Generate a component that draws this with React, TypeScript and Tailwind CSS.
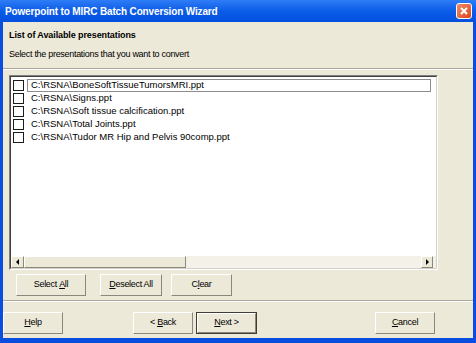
import React from "react";

const FONT = { fontFamily: '"Liberation Sans", Arial, sans-serif' };

const FILES = [
  "C:\\RSNA\\BoneSoftTissueTumorsMRI.ppt",
  "C:\\RSNA\\Signs.ppt",
  "C:\\RSNA\\Soft tissue calcification.ppt",
  "C:\\RSNA\\Total Joints.ppt",
  "C:\\RSNA\\Tudor MR Hip and Pelvis 90comp.ppt",
];

function Btn({
  children,
  className = "",
  isDefault = false,
}: {
  children: React.ReactNode;
  className?: string;
  isDefault?: boolean;
}) {
  return (
    <div
      className={
        "flex h-[22px] items-center justify-center text-[9px] tracking-[-0.3px] text-black " +
        (isDefault ? "border border-[#3f3d36] " : "") +
        className
      }
    >
      <div className="flex h-full w-full items-center justify-center border-t border-l border-t-white border-l-white border-r border-b border-r-[#8a887d] border-b-[#8a887d] bg-[#ece9d8]">
        {children}
      </div>
    </div>
  );
}

function Separator() {
  return (
    <div className="h-[2px] w-full border-t border-t-[#aca899] border-b border-b-white" />
  );
}

export default function App() {
  return (
    <div
      className="flex h-[343px] w-[476px] flex-col bg-[#0a4ee0]"
      style={FONT}
    >
      {/* title bar */}
      <div className="flex h-[22px] shrink-0 items-center justify-between bg-gradient-to-b from-[#2e7cf6] via-[#0a5ce8] to-[#0550de] pl-[5px] pr-[4px]">
        <span className="text-[10px] font-bold tracking-[-0.15px] text-white">
          Powerpoint to MIRC Batch Conversion Wizard
        </span>
        <div className="flex h-[16px] w-[16px] items-center justify-center rounded-[3px] border border-white bg-gradient-to-br from-[#f08a64] to-[#d8451c]">
          <svg width="10" height="10" viewBox="0 0 10 10">
            <path d="M2 2 L8 8 M8 2 L2 8" stroke="white" strokeWidth="2" />
          </svg>
        </div>
      </div>

      {/* body */}
      <div className="mx-[3px] mb-[5px] flex flex-1 flex-col bg-[#ece9d8]">
        <div className="flex h-[46px] shrink-0 flex-col bg-[#ece9d8] pl-[6px] pt-[7px]">
          <div className="text-[9px] font-bold tracking-[-0.1px] text-black">
            List of Available presentations
          </div>
          <div className="mt-[5px] text-[9px] tracking-[-0.3px] text-black">
            Select the presentations that you want to convert
          </div>
        </div>
        <Separator />

        {/* list box */}
        <div className="ml-[6px] mt-[5px] flex h-[195px] w-[429px] flex-col border border-t-[#808080] border-l-[#808080] border-r-white border-b-white">
          <div className="flex flex-1 flex-col border border-t-[#404040] border-l-[#404040] border-r-[#d4d0c8] border-b-[#d4d0c8] bg-white">
            <div className="flex flex-1 flex-col pt-[2px] pl-[2px]">
              {FILES.map((f, i) => (
                <div key={f} className="flex h-[13px] items-center">
                  <div className="h-[11px] w-[11px] shrink-0 border border-[#1c1c1c] bg-white" />
                  <div
                    className={
                      "ml-[3px] flex h-[13px] items-center pl-[3px] text-[9.5px] text-black " +
                      (i === 0
                        ? "w-[404px] border border-[#8c8c8c]"
                        : "border border-transparent")
                    }
                  >
                    {f}
                  </div>
                </div>
              ))}
            </div>
            {/* horizontal scrollbar */}
            <div className="flex h-[12px] items-stretch bg-[#f3f1e8]">
              <div className="flex w-[13px] items-center justify-center border border-t-white border-l-white border-r-[#8a887d] border-b-[#8a887d] bg-[#ece9d8]">
                <svg width="4" height="6" viewBox="0 0 4 6">
                  <path d="M3 0 L0 3 L3 6 Z" fill="black" />
                </svg>
              </div>
              <div className="w-[162px] border border-t-white border-l-white border-r-[#8a887d] border-b-[#8a887d] bg-[#ece9d8]" />
              <div className="flex-1" />
              <div className="flex w-[12px] items-center justify-center border border-t-white border-l-white border-r-[#8a887d] border-b-[#8a887d] bg-[#ece9d8]">
                <svg width="4" height="6" viewBox="0 0 4 6">
                  <path d="M1 0 L4 3 L1 6 Z" fill="black" />
                </svg>
              </div>
              <div className="w-[3px]" />
            </div>
          </div>
        </div>

        {/* list action buttons */}
        <div className="mt-[4px] flex pl-[13px]">
          <Btn className="w-[70px]">
            Select&nbsp;<u>A</u>ll
          </Btn>
          <Btn className="ml-[14px] w-[62px]">
            <u>D</u>eselect All
          </Btn>
          <Btn className="ml-[9px] w-[61px]">
            C<u>l</u>ear
          </Btn>
        </div>

        <div className="mt-[4px]">
          <Separator />
        </div>

        {/* wizard buttons */}
        <div className="mt-[10px] flex">
          <Btn className="w-[60px]">
            <u>H</u>elp
          </Btn>
          <Btn className="ml-[70px] w-[60px]">
            &lt;&nbsp;<u>B</u>ack
          </Btn>
          <Btn isDefault className="ml-[3px] w-[61px]">
            <u>N</u>ext&nbsp;&gt;
          </Btn>
          <Btn className="ml-[118px] w-[60px]">
            <u>C</u>ancel
          </Btn>
        </div>
      </div>
    </div>
  );
}
